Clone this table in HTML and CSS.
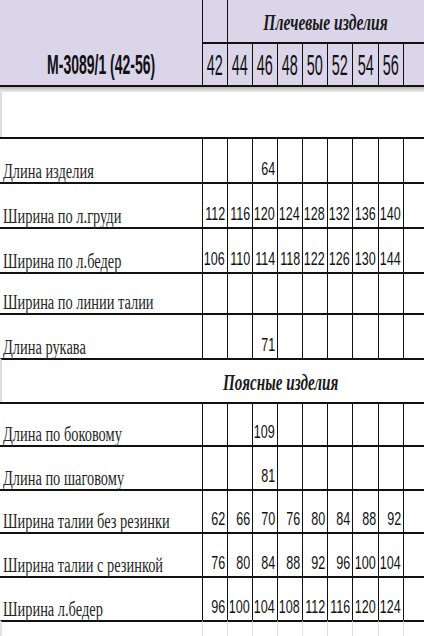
FILE: index.html
```html
<!DOCTYPE html>
<html lang="ru">
<head>
<meta charset="utf-8">
<title>M-3089/1</title>
<link rel="stylesheet" href="styles.css">
</head>
<body>
<div class="sheet">
  <div class="head">
    <div class="model"><span class="model-t">M-3089/1 (42-56)</span></div>
    <div class="blank"></div>
    <div class="group"><span class="group-t">Плечевые изделия</span></div>
    <div class="sz"><span>42</span></div>
    <div class="sz"><span>44</span></div>
    <div class="sz"><span>46</span></div>
    <div class="sz"><span>48</span></div>
    <div class="sz"><span>50</span></div>
    <div class="sz"><span>52</span></div>
    <div class="sz"><span>54</span></div>
    <div class="sz"><span>56</span></div>
    <div class="sz"></div>
  </div>
  <div class="shade"></div>
  <div class="gap"></div>

  <div class="row h45">
    <div class="lbl"><span>Длина изделия</span></div>
    <div class="v"></div><div class="v"></div><div class="v"><span>64</span></div><div class="v"></div><div class="v"></div><div class="v"></div><div class="v"></div><div class="v"></div><div class="v"></div>
  </div>
  <div class="row h45">
    <div class="lbl"><span>Ширина по л.груди</span></div>
    <div class="v"><span>112</span></div><div class="v"><span>116</span></div><div class="v"><span>120</span></div><div class="v"><span>124</span></div><div class="v"><span>128</span></div><div class="v"><span>132</span></div><div class="v"><span>136</span></div><div class="v"><span>140</span></div><div class="v"></div>
  </div>
  <div class="row h45">
    <div class="lbl"><span>Ширина по л.бедер</span></div>
    <div class="v"><span>106</span></div><div class="v"><span>110</span></div><div class="v"><span>114</span></div><div class="v"><span>118</span></div><div class="v"><span>122</span></div><div class="v"><span>126</span></div><div class="v"><span>130</span></div><div class="v"><span>144</span></div><div class="v"></div>
  </div>
  <div class="row h41">
    <div class="lbl"><span>Ширина по линии талии</span></div>
    <div class="v"></div><div class="v"></div><div class="v"></div><div class="v"></div><div class="v"></div><div class="v"></div><div class="v"></div><div class="v"></div><div class="v"></div>
  </div>
  <div class="row h45">
    <div class="lbl"><span>Длина рукава</span></div>
    <div class="v"></div><div class="v"></div><div class="v"><span>71</span></div><div class="v"></div><div class="v"></div><div class="v"></div><div class="v"></div><div class="v"></div><div class="v"></div>
  </div>

  <div class="section"><span class="section-t">Поясные изделия</span></div>

  <div class="row h43">
    <div class="lbl"><span>Длина по боковому</span></div>
    <div class="v"></div><div class="v"></div><div class="v"><span>109</span></div><div class="v"></div><div class="v"></div><div class="v"></div><div class="v"></div><div class="v"></div><div class="v"></div>
  </div>
  <div class="row h44">
    <div class="lbl"><span>Длина по шаговому</span></div>
    <div class="v"></div><div class="v"></div><div class="v"><span>81</span></div><div class="v"></div><div class="v"></div><div class="v"></div><div class="v"></div><div class="v"></div><div class="v"></div>
  </div>
  <div class="row h43">
    <div class="lbl"><span>Ширина талии без резинки</span></div>
    <div class="v"><span>62</span></div><div class="v"><span>66</span></div><div class="v"><span>70</span></div><div class="v"><span>76</span></div><div class="v"><span>80</span></div><div class="v"><span>84</span></div><div class="v"><span>88</span></div><div class="v"><span>92</span></div><div class="v"></div>
  </div>
  <div class="row h44">
    <div class="lbl"><span>Ширина талии с резинкой</span></div>
    <div class="v"><span>76</span></div><div class="v"><span>80</span></div><div class="v"><span>84</span></div><div class="v"><span>88</span></div><div class="v"><span>92</span></div><div class="v"><span>96</span></div><div class="v"><span>100</span></div><div class="v"><span>104</span></div><div class="v"></div>
  </div>
  <div class="row h44">
    <div class="lbl"><span>Ширина л.бедер</span></div>
    <div class="v"><span>96</span></div><div class="v"><span>100</span></div><div class="v"><span>104</span></div><div class="v"><span>108</span></div><div class="v"><span>112</span></div><div class="v"><span>116</span></div><div class="v"><span>120</span></div><div class="v"><span>124</span></div><div class="v"></div>
  </div>
  <div class="row tail">
    <div class="lbl"></div>
    <div class="v"></div><div class="v"></div><div class="v"></div><div class="v"></div><div class="v"></div><div class="v"></div><div class="v"></div><div class="v"></div><div class="v"></div>
  </div>
</div>
</body>
</html>
```
FILE: styles.css
```css
* { box-sizing: border-box; }
html, body { margin: 0; padding: 0; background: #fff; }
body { width: 424px; height: 636px; overflow: hidden; }

.sheet { width: 424px; }

.head {
  display: grid;
  grid-template-columns: 202px 25px 25px 25px 25px 25px 25px 26px 25px 21px;
  grid-template-rows: 42px 43px;
  height: 87px;
  background: #dbd5ea;
  border-bottom: 2px solid #111;
}
.model {
  grid-row: 1 / 3;
  grid-column: 1;
  display: flex;
  align-items: flex-end;
  justify-content: center;
  padding-bottom: 6px;
}
.model-t {
  display: inline-block;
  font-family: "Liberation Sans", Arial, sans-serif;
  font-weight: bold;
  font-size: 28px;
  line-height: 28px;
  color: #111;
  transform: scaleX(0.5);
  white-space: nowrap;
}
.blank {
  grid-row: 1;
  grid-column: 2;
  border-left: 1px solid #111;
}
.group {
  grid-row: 1;
  grid-column: 3 / -1;
  border-left: 1px solid #111;
  display: flex;
  align-items: center;
  justify-content: center;
  padding-top: 3px;
}
.group-t {
  display: inline-block;
  font-family: "Liberation Serif", "Times New Roman", serif;
  font-style: italic;
  font-weight: bold;
  font-size: 23px;
  line-height: 24px;
  color: #1a1a1a;
  transform: scaleX(0.68);
  white-space: nowrap;
}
.sz {
  grid-row: 2;
  border-left: 1px solid #111;
  border-top: 2px solid #111;
  display: flex;
  align-items: flex-end;
  justify-content: center;
  padding-bottom: 6px;
}
.sz span {
  display: inline-block;
  font-family: "Liberation Sans", Arial, sans-serif;
  font-size: 30px;
  line-height: 28px;
  color: #111;
  transform: scaleX(0.48);
}

.shade {
  height: 5px;
  background: linear-gradient(#b9b9b9, #ececec);
}
.gap {
  height: 45px;
  border-left: 2px solid #dedede;
}

.row {
  display: grid;
  grid-template-columns: 202px 25px 25px 25px 25px 25px 25px 26px 25px 21px;
}
.h45 { height: 45px; }
.h44 { height: 44px; }
.h43 { height: 43px; }
.h41 { height: 41px; }

.lbl {
  border-top: 2px solid #111;
  display: flex;
  align-items: flex-end;
  padding: 0 0 1px 3px;
}
.lbl span {
  display: inline-block;
  font-family: "Liberation Serif", "Times New Roman", serif;
  font-size: 20px;
  line-height: 20px;
  color: #262626;
  transform: scaleX(0.72);
  transform-origin: left center;
  white-space: nowrap;
}
.v {
  border-top: 2px solid #111;
  border-left: 1px solid #111;
  display: flex;
  align-items: flex-end;
  justify-content: flex-end;
  padding: 0 2px 4px 0;
}
.v span {
  display: inline-block;
  font-family: "Liberation Sans", Arial, sans-serif;
  font-size: 19px;
  line-height: 19px;
  color: #111;
  transform: scaleX(0.66);
  transform-origin: right center;
  white-space: nowrap;
}

.section {
  height: 44px;
  border-top: 2px solid #111;
  border-left: 2px solid #dedede;
  display: flex;
  align-items: center;
  padding-left: 221px;
  padding-top: 4px;
}
.section-t {
  display: inline-block;
  font-family: "Liberation Serif", "Times New Roman", serif;
  font-style: italic;
  font-weight: bold;
  font-size: 23px;
  line-height: 24px;
  color: #1a1a1a;
  transform: scaleX(0.66);
  transform-origin: left center;
  white-space: nowrap;
}

.tail { height: 20px; }
.tail .lbl { border-left: 2px solid #e2e2e2; }
.tail .v { border-left-color: #e0e0e0; }
```
